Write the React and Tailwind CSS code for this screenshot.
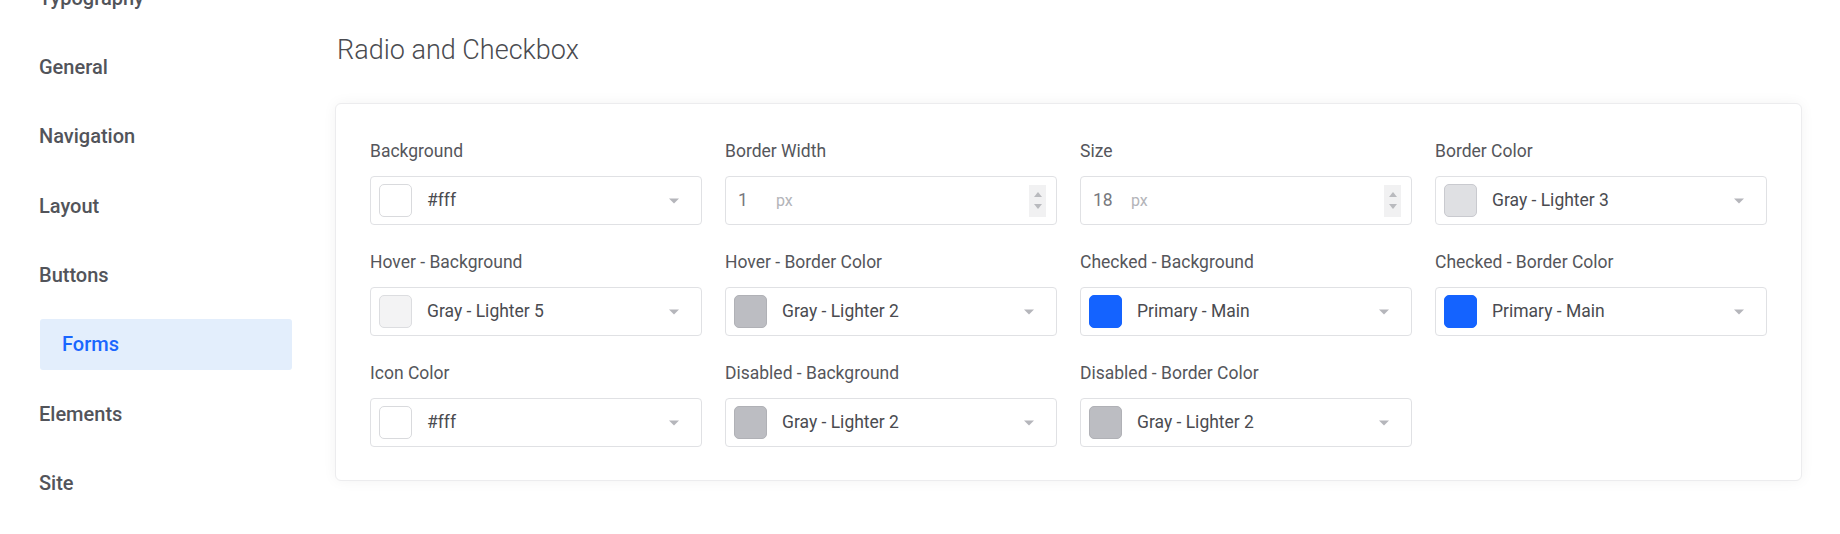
import React from "react";

const navItems = ["Typography", "General", "Navigation", "Layout", "Buttons", "Forms", "Elements", "Site"];

const fields = [
  { label: "Background", type: "color", value: "#fff", swatch: "bg-white border border-[#d9dadd]" },
  { label: "Border Width", type: "number", value: "1" },
  { label: "Size", type: "number", value: "18" },
  { label: "Border Color", type: "color", value: "Gray - Lighter 3", swatch: "bg-[#dfe0e3] border border-[#c9cacf]" },
  { label: "Hover - Background", type: "color", value: "Gray - Lighter 5", swatch: "bg-[#f3f3f4] border border-[#dcdde0]" },
  { label: "Hover - Border Color", type: "color", value: "Gray - Lighter 2", swatch: "bg-[#bcbdc2] border border-[#b0b1b6]" },
  { label: "Checked - Background", type: "color", value: "Primary - Main", swatch: "bg-[#1463ff] border border-[#1463ff]" },
  { label: "Checked - Border Color", type: "color", value: "Primary - Main", swatch: "bg-[#1463ff] border border-[#1463ff]" },
  { label: "Icon Color", type: "color", value: "#fff", swatch: "bg-white border border-[#d9dadd]" },
  { label: "Disabled - Background", type: "color", value: "Gray - Lighter 2", swatch: "bg-[#bcbdc2] border border-[#b0b1b6]" },
  { label: "Disabled - Border Color", type: "color", value: "Gray - Lighter 2", swatch: "bg-[#bcbdc2] border border-[#b0b1b6]" },
];

function Caret() {
  return (
    <svg width="10" height="6" viewBox="0 0 10 6" className="shrink-0">
      <path d="M0 0.5 H10 L5 5.5 Z" fill="#b5b6bb" />
    </svg>
  );
}

function ColorSelect({ value, swatch }) {
  return (
    <div className="h-[49px] border border-[#e0e1e4] rounded-[4px] bg-white flex items-center pl-[8px] pr-[22px]">
      <div className={`w-[33px] h-[33px] rounded-[5px] shrink-0 ${swatch}`} />
      <span className="ml-[15px] text-[17.5px] text-[#4a4b50] flex-1 leading-none">{value}</span>
      <Caret />
    </div>
  );
}

function NumberInput({ value }) {
  return (
    <div className="h-[49px] border border-[#e0e1e4] rounded-[4px] bg-white flex items-center pl-[12px] pr-[10px]">
      <span className="w-[38px] text-[17.5px] text-[#77787d] leading-none">{value}</span>
      <span className="text-[16px] text-[#b3b4b9] flex-1 leading-none">px</span>
      <div className="w-[17px] h-[32px] bg-[#f1f1f2] flex flex-col items-center justify-center gap-[7px]">
        <svg width="8" height="5" viewBox="0 0 8 5"><path d="M0 5 H8 L4 0 Z" fill="#b9babe" /></svg>
        <svg width="8" height="5" viewBox="0 0 8 5"><path d="M0 0 H8 L4 5 Z" fill="#b9babe" /></svg>
      </div>
    </div>
  );
}

export default function App() {
  return (
    <div className="w-[1840px] h-[534px] overflow-hidden bg-white flex" style={{ fontFamily: "Roboto, 'Noto Sans', sans-serif" }}>
      <aside className="w-[292px] shrink-0 pl-[40px] mt-[-28px] flex flex-col gap-[18.4px]">
        {navItems.map((item) =>
          item === "Forms" ? (
            <div key={item} className="h-[51px] flex items-center pl-[22px] bg-[#e3eefc] rounded-[3px] text-[20px] font-medium text-[#1a66ff]">
              {item}
            </div>
          ) : (
            <div key={item} className="h-[51px] flex items-center text-[20px] font-medium text-[#52545a] ml-[-1px]">
              {item}
            </div>
          )
        )}
      </aside>
      <main className="ml-[43px] w-[1467px] pt-[34px]">
        <h2 className="text-[27px] leading-[32px] font-light text-[#4a4b50] pl-[2px] mb-[37px]">Radio and Checkbox</h2>
        <div className="border border-[#ececee] rounded-[6px] bg-white shadow-[0_0_14px_rgba(0,0,0,0.05)] px-[34px] pt-[33px] pb-[33px]">
          <div className="grid grid-cols-4 gap-x-[23px] gap-y-[23px]">
            {fields.map((f) => (
              <div key={f.label}>
                <div className="text-[17.5px] leading-[24px] text-[#55565b] mt-[2px] mb-[13px]">{f.label}</div>
                {f.type === "number" ? <NumberInput value={f.value} /> : <ColorSelect value={f.value} swatch={f.swatch} />}
              </div>
            ))}
          </div>
        </div>
      </main>
    </div>
  );
}
